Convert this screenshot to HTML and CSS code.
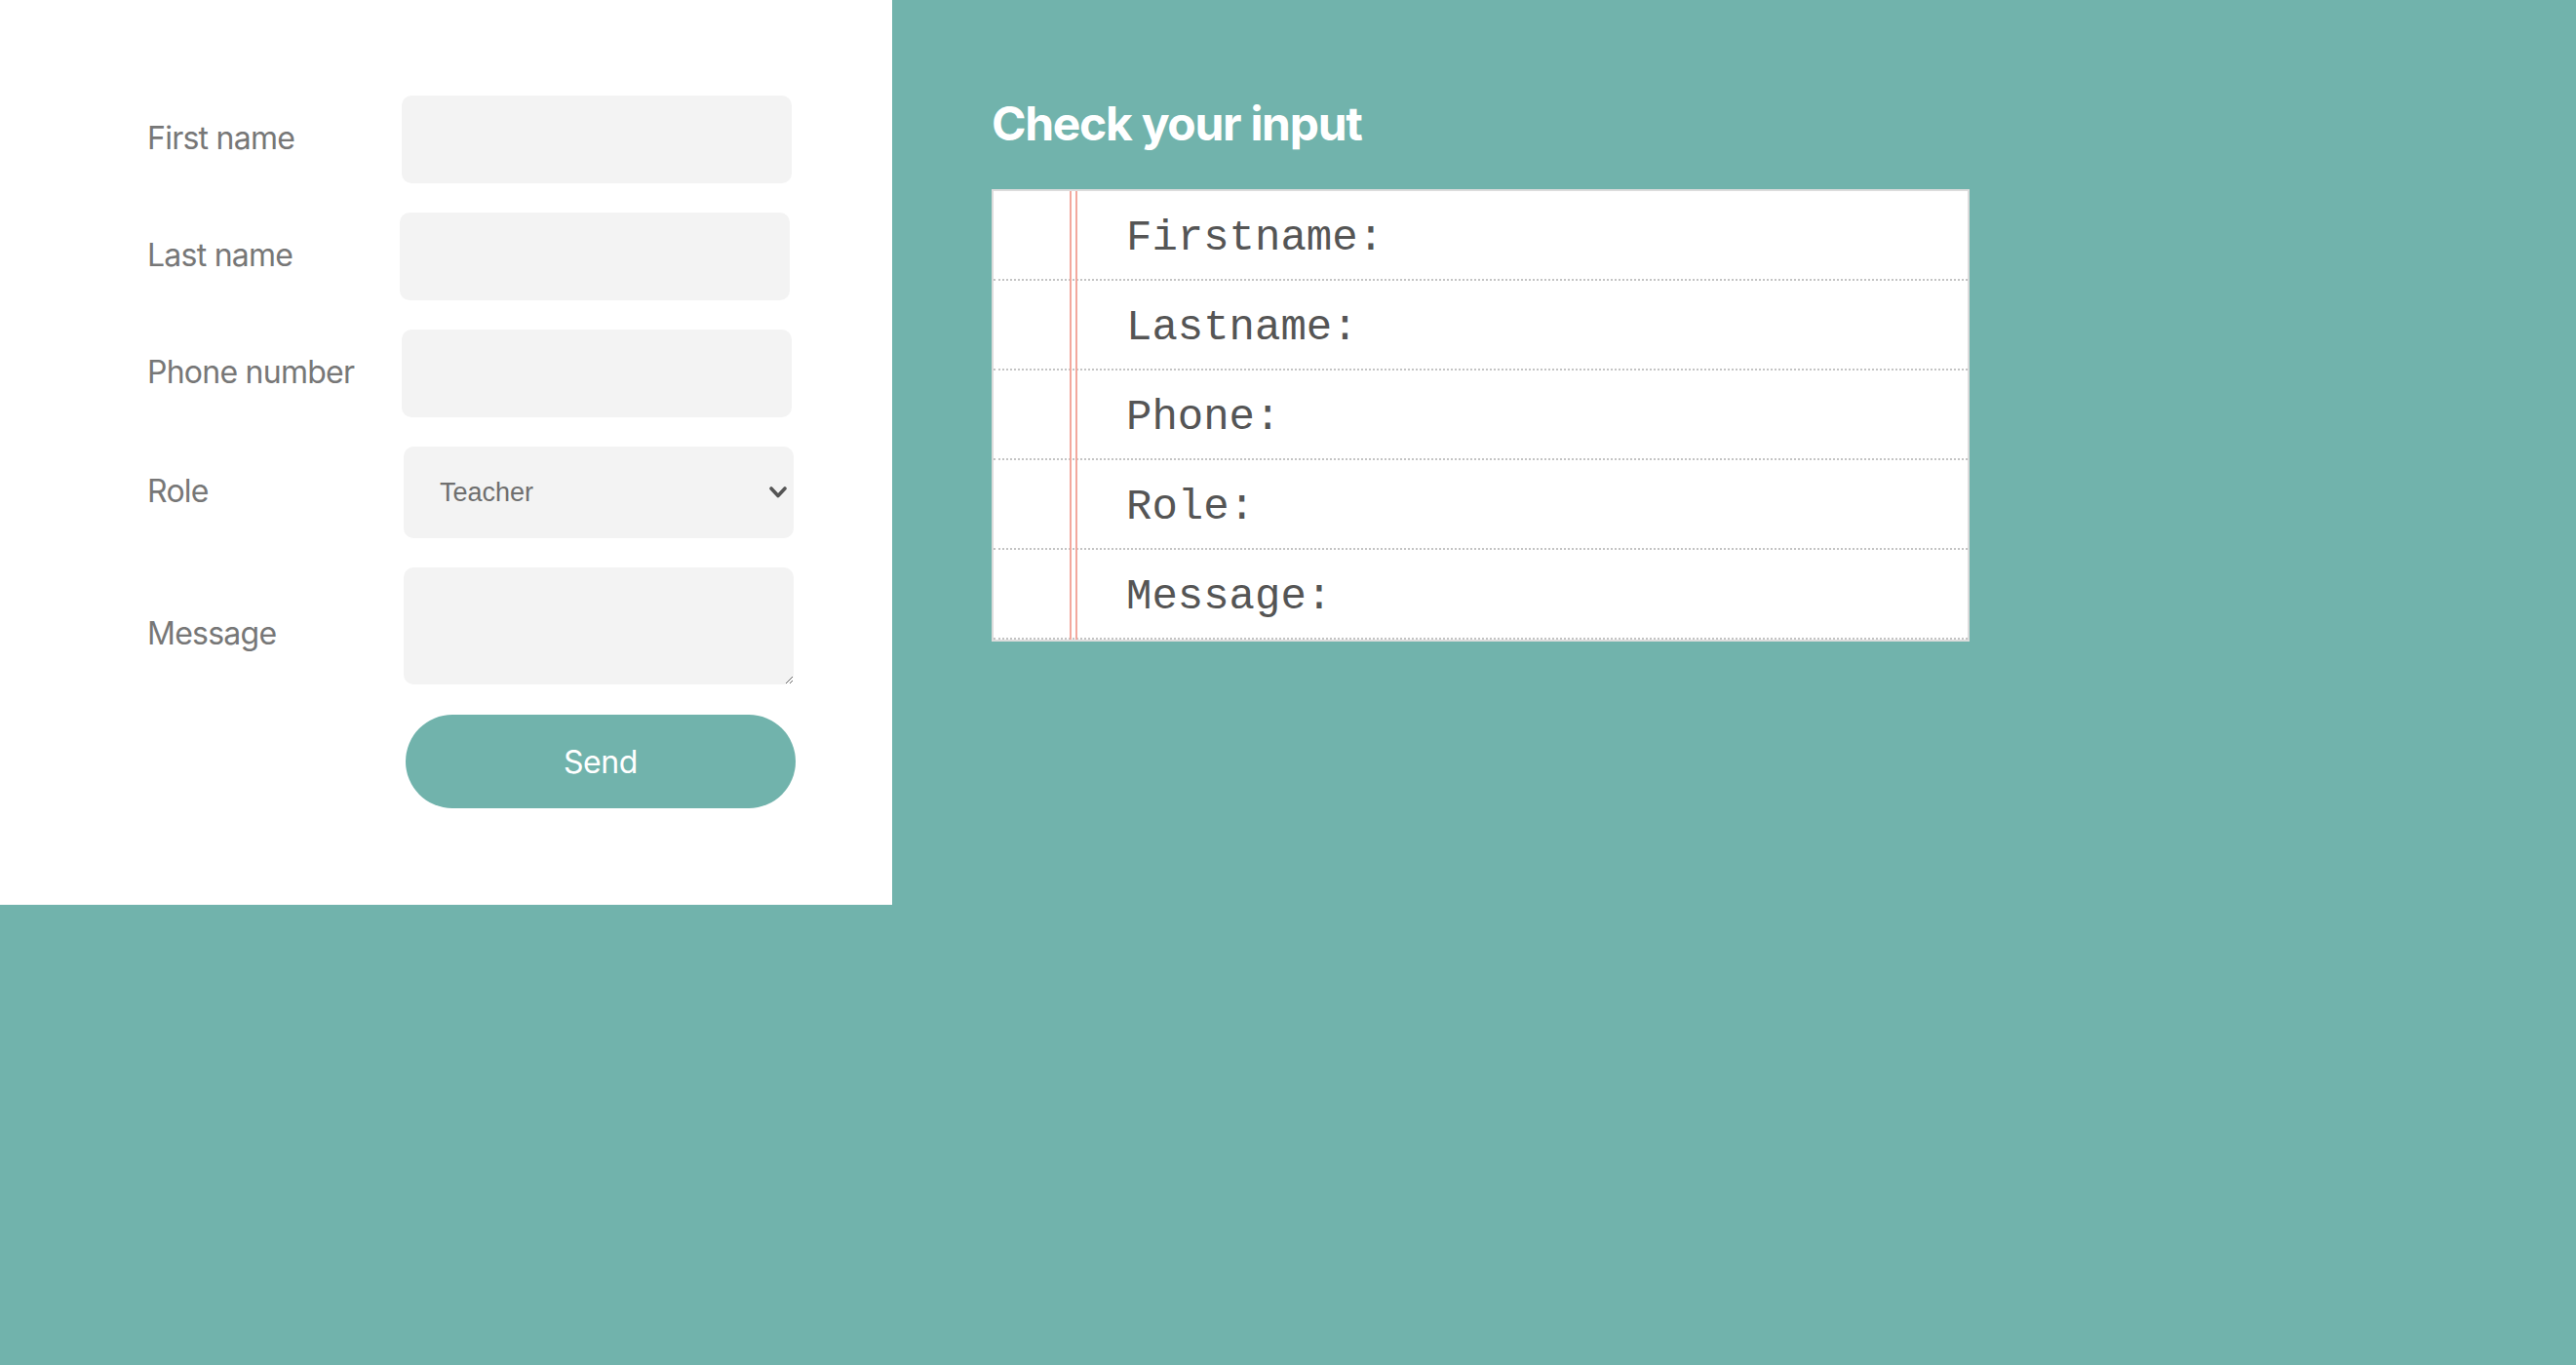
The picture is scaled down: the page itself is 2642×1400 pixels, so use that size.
FILE: index.html
```html
<!DOCTYPE html>
<html lang="en">
<head>
<meta charset="utf-8">
<title>Check your input</title>
<link rel="stylesheet" href="styles.css">
</head>
<body>
<div class="page">
  <form class="panel">
    <div class="row">
      <label class="label" for="fn">First name</label>
      <input class="field" id="fn" type="text">
    </div>
    <div class="row row-shift-l">
      <label class="label" for="ln">Last name</label>
      <input class="field" id="ln" type="text">
    </div>
    <div class="row">
      <label class="label" for="ph">Phone number</label>
      <input class="field" id="ph" type="tel">
    </div>
    <div class="row row-shift-r">
      <label class="label" for="role">Role</label>
      <div class="select-wrap">
        <select class="field select" id="role">
          <option>Teacher</option>
          <option>Student</option>
        </select>
        <svg class="chevron" width="18" height="12" viewBox="0 0 18 12"><path d="M2 2 L9 9.5 L16 2" fill="none" stroke="#555" stroke-width="3.6" stroke-linecap="round" stroke-linejoin="round"/></svg>
      </div>
    </div>
    <div class="row row-shift-r">
      <label class="label label-low" for="msg">Message</label>
      <textarea class="field area" id="msg"></textarea>
    </div>
    <div class="row row-btn">
      <span></span>
      <button class="send" type="button">Send</button>
    </div>
  </form>
  <section class="check">
    <h1 class="title">Check your input</h1>
    <div class="paper">
      <div class="line">Firstname:</div>
      <div class="line">Lastname:</div>
      <div class="line">Phone:</div>
      <div class="line">Role:</div>
      <div class="line">Message:</div>
    </div>
  </section>
</div>
</body>
</html>
```

FILE: styles.css
```css
html, body {
  margin: 0;
  padding: 0;
}
body {
  background: #71b3ac;
  font-family: Inter, "Helvetica Neue", Arial, sans-serif;
  min-height: 1400px;
}
.page {
  display: flex;
  align-items: flex-start;
}
.panel {
  background: #ffffff;
  width: 915px;
  height: 928px;
  box-sizing: border-box;
  padding: 98px 0 0 151px;
  display: flex;
  flex-direction: column;
  gap: 30px;
}
.row {
  display: grid;
  grid-template-columns: 261px 400px;
  align-items: center;
}
.row-shift-l { grid-template-columns: 259px 400px; }
.row-shift-r { grid-template-columns: 263px 400px; }
.row-btn { grid-template-columns: 265px 400px; }
.label {
  font-size: 32px;
  color: #777777;
  letter-spacing: -0.75px;
  margin-top: -4px;
}
.label-low {
  margin-top: 14px;
}
.field {
  box-sizing: border-box;
  width: 400px;
  height: 90px;
  border: none;
  border-radius: 10px;
  background: #f3f3f3;
  outline: none;
  margin: 0;
}
.select-wrap {
  position: relative;
  width: 400px;
}
.select {
  height: 94px;
  appearance: none;
  -webkit-appearance: none;
  padding: 0 0 0 37px;
  font-family: "Helvetica Neue", Arial, sans-serif;
  font-size: 27px;
  color: #6f6f6f;
}
.chevron {
  position: absolute;
  right: 7px;
  top: 41px;
  pointer-events: none;
}
.area {
  height: 120px;
  resize: both;
  display: block;
}
.send {
  width: 400px;
  height: 96px;
  border: none;
  border-radius: 48px;
  background: #71b3ac;
  color: #ffffff;
  font-family: Inter, "Helvetica Neue", Arial, sans-serif;
  font-size: 32px;
  letter-spacing: -0.4px;
  padding: 0;
  margin-top: 1px;
}
.check {
  margin-left: 102px;
  padding-top: 103px;
}
.title {
  margin: 0 0 43px 0;
  font-size: 48px;
  line-height: 48px;
  font-weight: 700;
  color: #ffffff;
  letter-spacing: -1.3px;
}
.paper {
  position: relative;
  width: 1003px;
  box-sizing: border-box;
  background: #ffffff;
  border: 2px solid #dcdcdc;
}
.paper::after {
  content: "";
  position: absolute;
  top: 0;
  bottom: 0;
  left: 78px;
  width: 4px;
  border-left: 2px solid #f3a99e;
  border-right: 2px solid #f3a99e;
}
.line {
  height: 90px;
  line-height: 97px;
  border-bottom: 2px dotted #c4c4c4;
  padding-left: 136px;
  font-family: "Courier New", "Liberation Mono", monospace;
  font-size: 44px;
  color: #555555;
}
```
